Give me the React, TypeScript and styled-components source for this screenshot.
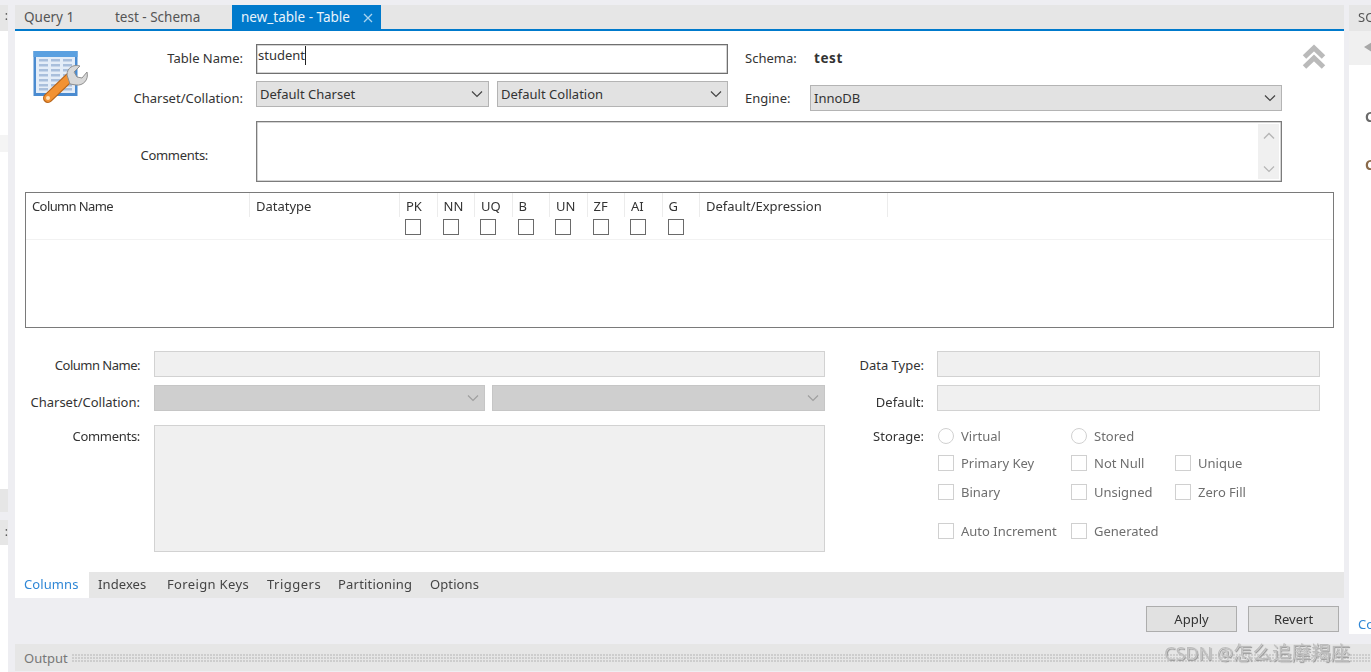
import React from "react";
import styled, { createGlobalStyle } from "styled-components";

const Global = createGlobalStyle`
  html, body { margin: 0; padding: 0; height: 672px; overflow: hidden; background: #eeeef2; }
  #root { height: 672px; }
  * { box-sizing: border-box; }
`;

const Page = styled.div`
  position: relative;
  width: 1371px;
  height: 672px;
  display: grid;
  grid-template-columns: 8px 1336px 27px;
  grid-template-rows: 638px 34px;
  padding-top: 5px;
  font-family: "Noto Sans", "Open Sans", sans-serif;
  font-size: 13px;
  color: #333;
  overflow: hidden;
  filter: blur(0.35px);
`;

const LeftStrip = styled.aside`
  grid-row: 1 / 3;
  width: 8px;
  display: flex;
  flex-direction: column;
  overflow: hidden;
`;
const LeftHead = styled.div`
  height: 26px;
  background: #e6e6e6;
  color: #555;
  font-size: 12px;
  line-height: 22px;
  text-align: right;
`;
const LeftWhite = styled.div<{ $h: number }>`
  height: ${(p) => p.$h}px;
  background: #fff;
  display: flex;
  flex-direction: column;
`;
const LeftCell = styled.div<{ $t: number; $h: number }>`
  margin-top: ${(p) => p.$t}px;
  height: ${(p) => p.$h}px;
  background: #f4f4f4;
`;
const LeftGrey = styled.div<{ $h: number; $t?: number }>`
  height: ${(p) => p.$h}px;
  margin-top: ${(p) => p.$t ?? 0}px;
  background: #e6e6e6;
  color: #555;
  line-height: ${(p) => p.$h - 2}px;
  text-align: right;
  font-size: 12px;
`;

const Main = styled.main`
  margin-left: 7px;
  width: 1329px;
  display: flex;
  flex-direction: column;
  height: 638px;
`;

const TabBar = styled.div`
  height: 26px;
  flex: none;
  display: flex;
  background: #e6e6e6;
  border-bottom: 2px solid #007acc;
`;
const DocTab = styled.div<{ $w: number; $active?: boolean }>`
  width: ${(p) => p.$w}px;
  height: 24px;
  padding-left: 9px;
  display: flex;
  align-items: center;
  justify-content: space-between;
  line-height: 22px;
  font-size: 13.5px;
  white-space: nowrap;
  color: ${(p) => (p.$active ? "#e8f3fb" : "#555")};
  background: ${(p) => (p.$active ? "#007acc" : "transparent")};
`;
const CloseIcon = styled.svg`
  width: 10px;
  height: 10px;
  margin-right: 8px;
  margin-top: 2px;
`;

const Content = styled.section`
  flex: 1;
  background: #fff;
  display: flex;
  flex-direction: column;
`;

const TopForm = styled.div`
  display: grid;
  grid-template-columns: 72px 169px 472px 82px 472px 1fr;
  grid-template-rows: 30px 30px 64px;
  row-gap: 7px;
  padding-top: 13px;
`;
const AppIcon = styled.svg`
  grid-row: 1 / 3;
  grid-column: 1;
  width: 56px;
  height: 56px;
  margin: 6px 0 0 18px;
`;
const TopLabel = styled.label<{ $pr?: number; $pt?: number; $pb?: number; $ls?: number }>`
  grid-column: 2;
  display: flex;
  justify-content: flex-end;
  align-items: center;
  padding-right: ${(p) => p.$pr ?? 13}px;
  padding-top: ${(p) => p.$pt ?? 0}px;
  padding-bottom: ${(p) => p.$pb ?? 0}px;
  letter-spacing: ${(p) => p.$ls ?? 0}px;
  white-space: nowrap;
`;
const NameInput = styled.div`
  height: 30px;
  border: 1px solid #707070;
  box-shadow: inset 0 0 0 0.5px #aaa;
  padding: 0 1px;
  font-size: 13px;
  line-height: 20px;
  color: #333;
  display: flex;
  align-items: flex-start;
`;
const Caret = styled.span`
  display: inline-block;
  width: 1px;
  height: 19px;
  margin-top: 1px;
  background: #222;
`;
const SideLabel = styled.div<{ $pt?: number; $pb?: number }>`
  padding-left: 17px;
  padding-top: ${(p) => p.$pt ?? 0}px;
  padding-bottom: ${(p) => p.$pb ?? 0}px;
  display: flex;
  align-items: center;
  white-space: nowrap;
`;
const SchemaValue = styled.div`
  font-weight: 700;
  font-size: 13.5px;
  display: flex;
  align-items: center;
  padding: 0 0 2px 4px;
  letter-spacing: 0.6px;
`;
const SelectPair = styled.div<{ $gap?: number }>`
  display: flex;
  gap: ${(p) => p.$gap ?? 8}px;
  align-items: flex-start;
`;
const SelectBox = styled.div<{ $w?: number; $disabled?: boolean; $mt?: number }>`
  width: ${(p) => (p.$w ? `${p.$w}px` : "100%")};
  height: 26px;
  margin-top: ${(p) => p.$mt ?? 0}px;
  flex: none;
  display: flex;
  align-items: center;
  justify-content: space-between;
  padding: 0 5px 0 3px;
  background: ${(p) => (p.$disabled ? "#cfcfcf" : "#e2e2e2")};
  border: 1px solid ${(p) => (p.$disabled ? "#c6c6c6" : "#b4b4b4")};
  color: #333;
  white-space: nowrap;
`;
const Chevron = styled.svg`
  width: 12px;
  height: 8px;
  flex: none;
`;
const CollapseCell = styled.div`
  padding: 0 0 0 19px;
`;
const CommentsArea = styled.div`
  grid-column: 3 / 6;
  margin-top: 3px;
  border: 1px solid #7c7c7c;
  box-shadow: inset 0 0 0 0.5px #aaa;
  display: flex;
  justify-content: flex-end;
  padding: 2px;
`;
const ScrollTrack = styled.div`
  width: 21px;
  background: #f0f0f0;
  display: flex;
  flex-direction: column;
  justify-content: space-between;
  align-items: center;
  padding: 8px 0 6px;
`;

const ColumnTable = styled.div`
  margin: 10px 10px 0;
  height: 136px;
  width: 1309px;
  border: 1px solid #7a7a7a;
  flex: none;
`;
const HeadRow = styled.div`
  height: 47px;
  display: grid;
  grid-template-columns: 224px 150px repeat(8, 37.5px) 188px 1fr;
  border-bottom: 1px solid #f2f2f2;
`;
const HeadCell = styled.div`
  height: 24px;
  padding: 4px 0 0 6px;
  line-height: 18px;
  white-space: nowrap;
  border-right: 1px solid #ececec;
  position: relative;
  font-size: 13px;
  &:first-child {
    letter-spacing: -0.6px;
  }
`;
const HeadBox = styled.span`
  position: absolute;
  left: 5px;
  top: 26px;
  width: 16px;
  height: 16px;
  border: 1px solid #6a6a6a;
  background: #fff;
`;

const LowerForm = styled.div`
  margin-top: 23px;
  display: grid;
  grid-template-columns: 139px 671px 112px 383px;
  grid-template-rows: 34px 40px 127px;
  height: 201px;
`;
const LowLabel = styled.label<{ $top?: boolean; $ls?: number; $pr?: number }>`
  display: flex;
  justify-content: flex-end;
  align-items: ${(p) => (p.$top ? "flex-start" : "center")};
  padding-right: ${(p) => p.$pr ?? 13}px;
  padding-top: ${(p) => (p.$top ? 2 : 0)}px;
  padding-bottom: ${(p) => (p.$top ? 0 : 6)}px;
  letter-spacing: ${(p) => p.$ls ?? 0}px;
  white-space: nowrap;
`;
const DisabledField = styled.div<{ $h?: number }>`
  height: ${(p) => p.$h ?? 26}px;
  background: #f0f0f0;
  border: 1px solid #d2d2d2;
`;
const OptionGrid = styled.div`
  display: grid;
  grid-template-columns: 133px 104px 1fr;
  grid-template-rows: 27px 29px 39px 20px;
  padding: 3px 0 0 1px;
  font-size: 13px;
  color: #6e6e6e;
`;
const Option = styled.div`
  display: flex;
  align-items: flex-start;
  white-space: nowrap;
  line-height: 16px;
`;
const FormBox = styled.span<{ $round?: boolean }>`
  width: 16px;
  height: 16px;
  flex: none;
  margin-right: 7px;
  background: #fff;
  border: 1px solid #d0d0d0;
  border-radius: ${(p) => (p.$round ? "50%" : "0")};
`;
const Spacer = styled.div``;

const SubTabs = styled.div`
  height: 26px;
  flex: none;
  display: flex;
  background: #e6e6e6;
  align-items: stretch;
`;
const SubTab = styled.div<{ $active?: boolean; $w: number; $ls?: number }>`
  width: ${(p) => p.$w}px;
  padding-left: 9px;
  line-height: 25px;
  white-space: nowrap;
  letter-spacing: ${(p) => p.$ls ?? 0.1}px;
  background: ${(p) => (p.$active ? "#fff" : "transparent")};
  color: ${(p) => (p.$active ? "#2f87d6" : "#444")};
`;
const Footer = styled.div`
  height: 45px;
  flex: none;
  display: flex;
  justify-content: flex-end;
  gap: 11px;
  padding: 8px 5px 0 0;
`;
const ActionButton = styled.div`
  width: 91px;
  height: 26px;
  background: #e1e1e1;
  border: 1px solid #adadad;
  display: flex;
  align-items: center;
  justify-content: center;
  color: #333;
`;

const RightStrip = styled.aside`
  margin-left: 5px;
  width: 22px;
  height: 629px;
  background: #fff;
  display: flex;
  flex-direction: column;
  overflow: hidden;
  white-space: nowrap;
`;
const RightHead = styled.div`
  height: 26px;
  background: #e6e6e6;
  padding-left: 9px;
  line-height: 24px;
  color: #555;
  overflow: hidden;
`;
const RightTool = styled.div`
  height: 34px;
  background: #f0f0f0;
  padding: 11px 0 0 15px;
`;
const Arrow = styled.span`
  display: block;
  width: 0;
  height: 0;
  border-style: solid;
  border-width: 5px 8px 5px 0;
  border-color: transparent #a8a8a8 transparent transparent;
`;
const RightMark = styled.div<{ $mt: number; $c: string }>`
  margin-top: ${(p) => p.$mt}px;
  padding-left: 16px;
  font-weight: 700;
  color: ${(p) => p.$c};
  font-size: 14px;
  line-height: 18px;
`;
const RightLink = styled.div`
  margin-top: auto;
  padding: 0 0 0 9px;
  color: #2f87d6;
  line-height: 19px;
`;

const OutputBar = styled.div`
  grid-column: 2 / 4;
  margin: 1px 0 0 7px;
  height: 27px;
  background: #e6e6e6;
  display: flex;
  align-items: center;
  padding-left: 9px;
  color: #777;
  font-size: 13px;
`;
const Dots = styled.div`
  flex: 1;
  height: 8px;
  margin-left: 4px;
  background-image: radial-gradient(circle at 1px 1px, #cdcdcd 0.8px, transparent 1px);
  background-size: 3px 3px;
`;
const Watermark = styled.div`
  position: absolute;
  left: 1164px;
  top: 641px;
  font-family: "Noto Sans", "Noto Sans CJK SC", sans-serif;
  font-size: 18px;
  line-height: 24px;
  color: #bdbdbd;
  white-space: nowrap;
  text-shadow: 0 0 1px #fff, 1px 1px 1px #8a8a8a;
`;
const WatermarkCjk = styled.span`
  font-size: 19.5px;
`;

const Down = ({ c = "#444" }: { c?: string }) => (
  <Chevron viewBox="0 0 12 8">
    <path d="M1 1.5 L6 6.5 L11 1.5" fill="none" stroke={c} strokeWidth="1.2" />
  </Chevron>
);

const TableIcon = () => (
  <AppIcon viewBox="0 0 56 56">
    <rect x="0.5" y="1" width="44" height="45" fill="#4a8bd0" />
    <rect x="0.5" y="1" width="44" height="6" fill="#5aa0e0" />
    <rect x="3" y="7" width="39" height="36" fill="#e4edf8" />
    {[9, 14, 19, 24, 29, 34, 38].map((y) =>
      [6, 18, 30].map((x) => <rect key={`${x}-${y}`} x={x} y={y} width="9" height="2.5" fill="#a9bfdc" />)
    )}
    <path d="M15 48 L36 28" stroke="#b9661a" strokeWidth="10" strokeLinecap="round" />
    <path d="M15 48 L36 28" stroke="#f29233" strokeWidth="7.5" strokeLinecap="round" />
    <circle cx="15" cy="48" r="2" fill="#ffe0b8" />
    <path
      d="M34 25 C34 18 40 14 47 16 L41 22 L44 27 L49 28 L54 22 C56 30 50 36 43 35 L37 34 Z"
      fill="#d8d8d8"
      stroke="#8f8f8f"
      strokeWidth="1"
    />
  </AppIcon>
);

const CollapseIcon = () => (
  <svg width="26" height="26" viewBox="0 0 26 26">
    <path d="M3.5 13 L13 4 L22.5 13" fill="none" stroke="#bababa" strokeWidth="5" />
    <path d="M3.5 23 L13 14 L22.5 23" fill="none" stroke="#bababa" strokeWidth="5" />
  </svg>
);

const headers = ["Column Name", "Datatype", "PK", "NN", "UQ", "B", "UN", "ZF", "AI", "G", "Default/Expression"];

export default function App() {
  return (
    <Page>
      <Global />
      <LeftStrip>
        <LeftHead>:</LeftHead>
        <LeftWhite $h={458}>
          <LeftCell $t={104} $h={17} />
        </LeftWhite>
        <LeftGrey $h={23} />
        <LeftGrey $h={25} $t={8}>:</LeftGrey>
        <LeftWhite $h={127} />
      </LeftStrip>

      <Main>
        <TabBar>
          <DocTab $w={91}>Query 1</DocTab>
          <DocTab $w={126}>test - Schema</DocTab>
          <DocTab $w={149} $active>
            new_table - Table
            <CloseIcon viewBox="0 0 10 10">
              <path d="M1 1 L9 9 M9 1 L1 9" stroke="#a9d4ef" strokeWidth="1.3" />
            </CloseIcon>
          </DocTab>
        </TabBar>

        <Content>
          <TopForm>
            <TableIcon />
            <TopLabel $pb={2}>Table Name:</TopLabel>
            <NameInput>
              student
              <Caret />
            </NameInput>
            <SideLabel $pb={2}>Schema:</SideLabel>
            <SchemaValue>test</SchemaValue>
            <CollapseCell>
              <CollapseIcon />
            </CollapseCell>

            <TopLabel $pt={3}>Charset/Collation:</TopLabel>
            <SelectPair>
              <SelectBox $w={233}>
                Default Charset
                <Down />
              </SelectBox>
              <SelectBox $w={231}>
                Default Collation
                <Down />
              </SelectBox>
            </SelectPair>
            <SideLabel $pt={3}>Engine:</SideLabel>
            <SelectBox $mt={4}>
              InnoDB
              <Down />
            </SelectBox>
            <Spacer />

            <TopLabel $pr={48} $pt={10} $ls={-0.3}>Comments:</TopLabel>
            <CommentsArea>
              <ScrollTrack>
                <Chevron viewBox="0 0 12 8">
                  <path d="M1 6.5 L6 1.5 L11 6.5" fill="none" stroke="#b5b5b5" strokeWidth="1.4" />
                </Chevron>
                <Down c="#b5b5b5" />
              </ScrollTrack>
            </CommentsArea>
          </TopForm>

          <ColumnTable>
            <HeadRow>
              {headers.map((h, i) => (
                <HeadCell key={h}>
                  {h}
                  {i >= 2 && i <= 9 && <HeadBox />}
                </HeadCell>
              ))}
            </HeadRow>
          </ColumnTable>

          <LowerForm>
            <LowLabel $ls={-0.5} $pr={14}>Column Name:</LowLabel>
            <DisabledField />
            <LowLabel>Data Type:</LowLabel>
            <DisabledField />

            <LowLabel $pr={14}>Charset/Collation:</LowLabel>
            <SelectPair $gap={7}>
              <SelectBox $w={331} $disabled>
                <span />
                <Down c="#9f9f9f" />
              </SelectBox>
              <SelectBox $w={333} $disabled>
                <span />
                <Down c="#9f9f9f" />
              </SelectBox>
            </SelectPair>
            <LowLabel>Default:</LowLabel>
            <DisabledField />

            <LowLabel $top $pr={14} $ls={-0.3}>Comments:</LowLabel>
            <DisabledField $h={127} />
            <LowLabel $top>Storage:</LowLabel>
            <OptionGrid>
              <Option><FormBox $round />Virtual</Option>
              <Option><FormBox $round />Stored</Option>
              <Spacer />
              <Option><FormBox />Primary Key</Option>
              <Option><FormBox />Not Null</Option>
              <Option><FormBox />Unique</Option>
              <Option><FormBox />Binary</Option>
              <Option><FormBox />Unsigned</Option>
              <Option><FormBox />Zero Fill</Option>
              <Option><FormBox />Auto Increment</Option>
              <Option><FormBox />Generated</Option>
            </OptionGrid>
          </LowerForm>
        </Content>

        <SubTabs>
          <SubTab $active $w={74}>Columns</SubTab>
          <SubTab $w={69}>Indexes</SubTab>
          <SubTab $w={100} $ls={0.35}>Foreign Keys</SubTab>
          <SubTab $w={71} $ls={0.5}>Triggers</SubTab>
          <SubTab $w={92} $ls={0.2}>Partitioning</SubTab>
          <SubTab $w={70}>Options</SubTab>
        </SubTabs>
        <Footer>
          <ActionButton>Apply</ActionButton>
          <ActionButton>Revert</ActionButton>
        </Footer>
      </Main>

      <RightStrip>
        <RightHead>SQL</RightHead>
        <RightTool>
          <Arrow />
        </RightTool>
        <RightMark $mt={43} $c="#6a6a6a">C</RightMark>
        <RightMark $mt={30} $c="#8a6a4a">C</RightMark>
        <RightLink>Co</RightLink>
      </RightStrip>

      <OutputBar>
        Output
        <Dots />
      </OutputBar>
      <Watermark>
        CSDN @<WatermarkCjk>怎么追摩羯座</WatermarkCjk>
      </Watermark>
    </Page>
  );
}
